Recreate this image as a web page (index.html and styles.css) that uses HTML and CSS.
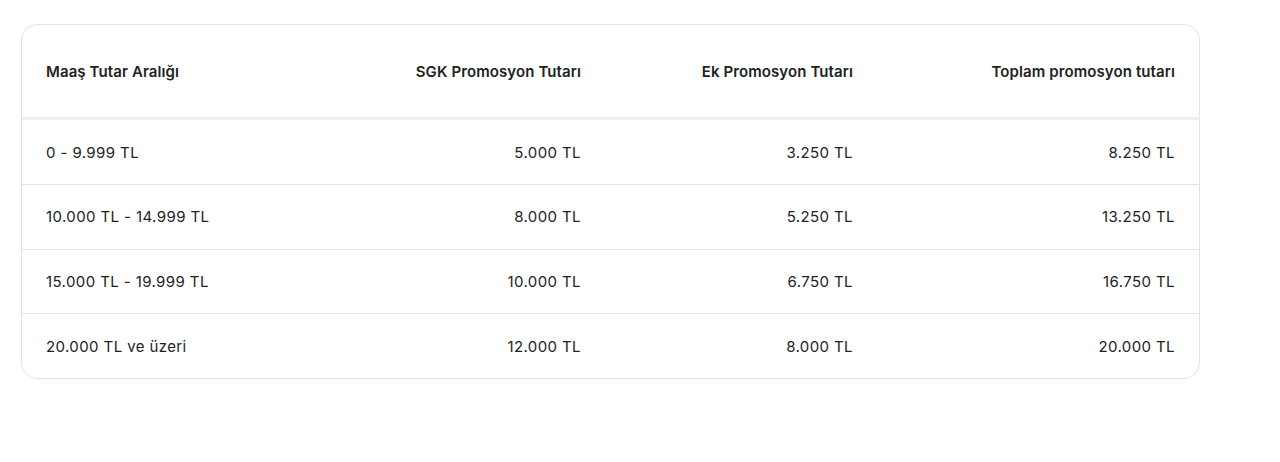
FILE: index.html
```html
<!DOCTYPE html>
<html lang="tr">
<head>
    <meta charset="UTF-8">
    <meta name="viewport" content="width=device-width, initial-scale=1.0">
    <title>Promosyon Tablosu</title>
    <link rel="stylesheet" href="styles.css">
</head>
<body>
    <div class="table-wrap">
        <table class="promo-table">
            <colgroup>
                <col class="c1">
                <col class="c2">
                <col class="c3">
                <col class="c4">
            </colgroup>
            <thead>
                <tr>
                    <th>Maaş Tutar Aralığı</th>
                    <th class="num">SGK Promosyon Tutarı</th>
                    <th class="num">Ek Promosyon Tutarı</th>
                    <th class="num">Toplam promosyon tutarı</th>
                </tr>
            </thead>
            <tbody>
                <tr>
                    <td>0 - 9.999 TL</td>
                    <td class="num">5.000 TL</td>
                    <td class="num">3.250 TL</td>
                    <td class="num">8.250 TL</td>
                </tr>
                <tr>
                    <td>10.000 TL - 14.999 TL</td>
                    <td class="num">8.000 TL</td>
                    <td class="num">5.250 TL</td>
                    <td class="num">13.250 TL</td>
                </tr>
                <tr>
                    <td>15.000 TL - 19.999 TL</td>
                    <td class="num">10.000 TL</td>
                    <td class="num">6.750 TL</td>
                    <td class="num">16.750 TL</td>
                </tr>
                <tr>
                    <td>20.000 TL ve üzeri</td>
                    <td class="num">12.000 TL</td>
                    <td class="num">8.000 TL</td>
                    <td class="num">20.000 TL</td>
                </tr>
            </tbody>
        </table>
    </div>
</body>
</html>
```

FILE: styles.css
```css
body {
    margin: 0;
    padding: 24px 0 0 21px;
    background: #fff;
    font-family: Inter, "Noto Sans", Arial, sans-serif;
    color: #222;
}
.table-wrap {
    width: 1177px;
    border: 1px solid #e3e3e3;
    border-radius: 16px;
    overflow: hidden;
}
.promo-table {
    width: 100%;
    border-collapse: collapse;
    table-layout: fixed;
    font-size: 15px;
}
.c1 { width: 311px; }
.c2 { width: 272px; }
.c3 { width: 272px; }
.c4 { width: 322px; }
th, td {
    padding: 0 24px;
    text-align: left;
}
th {
    height: 92.4px;
    font-weight: 600;
    letter-spacing: 0.1px;
    border-bottom: 3px solid #eeeeee;
}
td {
    height: 63.7px;
    font-weight: 400;
    letter-spacing: 0.4px;
    border-bottom: 1px solid #e3e3e3;
}
tbody tr:last-child td {
    border-bottom: none;
}
.num {
    text-align: right;
}
```
